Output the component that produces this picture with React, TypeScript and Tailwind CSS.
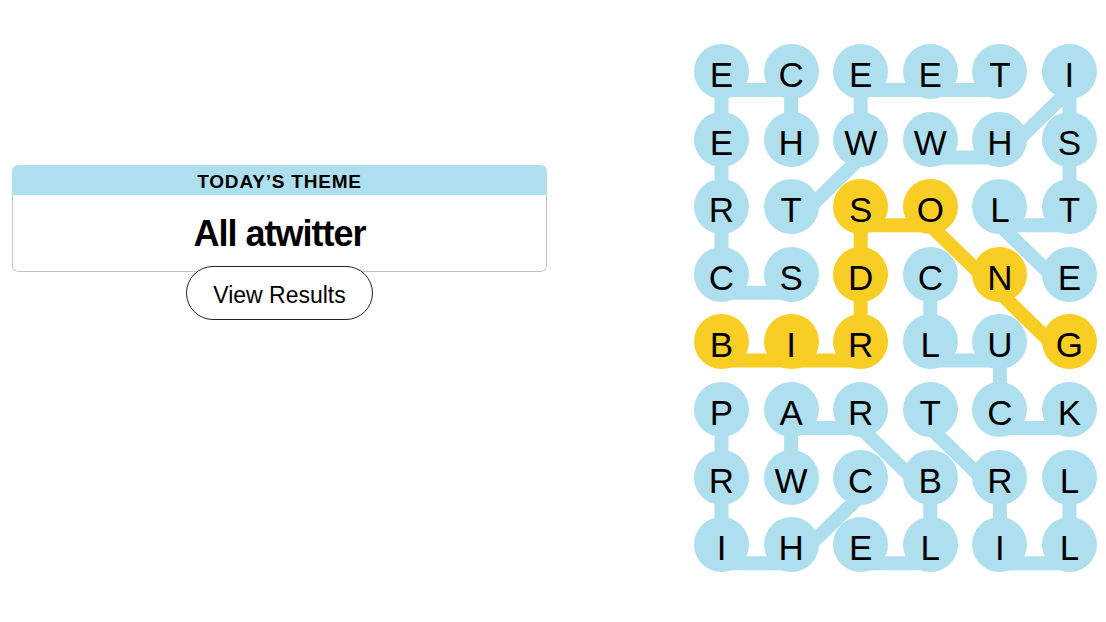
import React from "react";

const letters = [
  "ECEETI",
  "EHWWHS",
  "RTSOLT",
  "CSDCNE",
  "BIRLUG",
  "PARTCK",
  "RWCBRL",
  "IHELIL",
];

const yellowCells = new Set(["4,0", "4,1", "4,2", "3,2", "2,2", "2,3", "3,4", "4,5"]);

type Cell = [number, number];

const bluePaths: Cell[][] = [
  [[3, 1], [3, 0], [2, 0], [1, 0], [0, 0], [0, 1], [1, 1]],
  [[2, 1], [1, 2], [0, 2], [0, 3], [0, 4]],
  [[1, 3], [1, 4], [0, 5], [1, 5], [2, 5], [2, 4], [3, 5]],
  [[3, 3], [4, 3], [4, 4], [5, 4], [5, 5]],
  [[6, 2], [7, 1], [7, 0], [6, 0], [5, 0]],
  [[6, 1], [5, 1], [5, 2], [6, 3], [7, 3], [7, 2]],
  [[5, 3], [6, 4], [7, 4], [7, 5], [6, 5]],
];

const yellowPath: Cell[] = [[4, 0], [4, 1], [4, 2], [3, 2], [2, 2], [2, 3], [3, 4], [4, 5]];

const BLUE = "#aedfee";
const YELLOW = "#f8cd24";

const pt = ([r, c]: Cell) => `${27.5 + c * 69.6},${27.5 + r * 67.6 + 18.5}`;

function Board() {
  return (
    <div className="relative w-[403px] h-[528px]">
      <svg className="absolute inset-0" width="403" height="528" viewBox="0 0 403 528">
        {bluePaths.map((p, i) => (
          <polyline
            key={i}
            points={p.map(pt).join(" ")}
            fill="none"
            stroke={BLUE}
            strokeWidth={14}
            strokeLinejoin="round"
          />
        ))}
        <polyline
          points={yellowPath.map(pt).join(" ")}
          fill="none"
          stroke={YELLOW}
          strokeWidth={14}
          strokeLinejoin="round"
        />
      </svg>
      <div className="relative grid grid-cols-6 gap-x-[14.6px] gap-y-[12.6px]">
        {letters.map((row, r) =>
          row.split("").map((ch, c) => (
            <div
              key={`${r}-${c}`}
              className={`w-[55px] h-[55px] rounded-full flex items-center justify-center pt-[6px] text-[35px] leading-none text-black ${
                yellowCells.has(`${r},${c}`) ? "bg-[#f8cd24]" : "bg-[#aedfee]"
              }`}
            >
              {ch}
            </div>
          ))
        )}
      </div>
    </div>
  );
}

export default function App() {
  return (
    <div
      className="flex w-full h-[622px] bg-white text-black"
      style={{ fontFamily: '"Liberation Sans", Arial, sans-serif' }}
    >
      <div className="w-[559px] shrink-0 pl-[12px] pr-[12px] pt-[165px] flex flex-col items-center">
        <div className="w-[535px] rounded-[6px] overflow-hidden">
          <div className="h-[30px] bg-[#aedfee] flex items-center justify-center pt-[2px]">
            <span className="text-[19px] font-bold uppercase tracking-[0.8px] leading-none">
              Today’s Theme
            </span>
          </div>
          <div className="h-[77px] border-x border-b border-[#c2c2c2] rounded-b-[6px] flex items-center justify-center">
            <span className="text-[36px] font-bold tracking-[-1px] leading-none pt-[2px]">
              All atwitter
            </span>
          </div>
        </div>
        <button className="-mt-[6px] relative w-[187px] h-[54px] rounded-full border border-[#222] bg-white flex items-center justify-center pt-[5px] text-[23px] leading-none">
          View Results
        </button>
      </div>
      <div className="ml-[135px] mt-[44px]">
        <Board />
      </div>
    </div>
  );
}
